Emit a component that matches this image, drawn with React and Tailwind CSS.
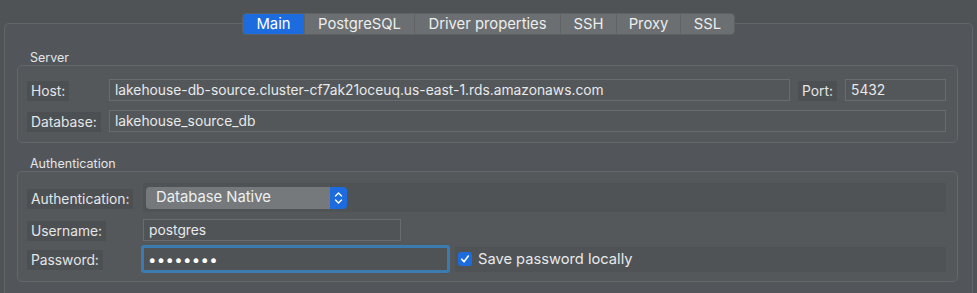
const tabs = ['Main', 'PostgreSQL', 'Driver properties', 'SSH', 'Proxy', 'SSL'];
const tabWidths = ['w-[61px]', 'w-[110px]', 'w-[146px]', 'w-[56px]', 'w-[64px]', 'w-[54px]'];

function Label({ children, className = '' }) {
  return (
    <span className={`inline-flex h-[20px] items-center bg-[#4c5053] px-[4px] text-[13.8px] text-[#e4e5e6] ${className}`}>
      {children}
    </span>
  );
}

function Field({ value, className = '' }) {
  return (
    <div className={`flex h-[22px] items-center border border-[#686c6e] bg-[#53575a] pl-[5px] text-[13.8px] text-[#e8e9ea] ${className}`}>
      {value}
    </div>
  );
}

function App() {
  return (
    <div className="h-[293px] w-[977px] overflow-hidden bg-[#4f5356] px-[4px] pt-[13px] font-['Inter',sans-serif]">
      <div className="relative z-10 flex justify-center">
        <div className="flex h-[22px] overflow-hidden rounded-[4px] border border-[#5c6062] text-[14.8px] text-[#eceded]">
          {tabs.map((t, i) => (
            <div
              key={t}
              className={`flex items-center justify-center pt-[1px] ${tabWidths[i]} ${i === 0 ? 'bg-[#1c6ce0] text-white' : 'border-l border-[#5f6365] bg-[#6b6f71]'}`}
            >
              {t}
            </div>
          ))}
        </div>
      </div>

      <div className="-mt-[12px] h-[300px] rounded-[5px] border border-[#62666a] bg-[#52565a] px-[12px] pt-[26px]">
        <div className="ml-[13px] h-[15px] text-[12.5px] leading-[15px] text-[#e4e5e6]">Server</div>
        <div className="w-[941px] rounded-[5px] border border-[#64686a] bg-[#54585b] pb-[10px] pl-[9px] pr-[11px] pt-[13px]">
          <div className="flex h-[22px] items-center">
            <div className="w-[82px]"><Label>Host:</Label></div>
            <Field value="lakehouse-db-source.cluster-cf7ak21oceuq.us-east-1.rds.amazonaws.com" className="w-[681px]" />
            <div className="ml-[8px] w-[47px]"><Label>Port:</Label></div>
            <Field value="5432" className="w-[101px]" />
          </div>
          <div className="mt-[9px] flex h-[22px] items-center">
            <div className="w-[82px]"><Label>Database:</Label></div>
            <Field value="lakehouse_source_db" className="flex-1" />
          </div>
        </div>

        <div className="ml-[13px] mt-[13px] h-[15px] text-[12.5px] leading-[15px] text-[#e4e5e6]">Authentication</div>
        <div className="w-[941px] rounded-[5px] border border-[#64686a] bg-[#54585b] pb-[8px] pl-[9px] pr-[11px] pt-[11px]">
          <div className="flex h-[29px] items-center">
            <div className="w-[116px]"><Label>Authentication:</Label></div>
            <div className="flex h-[29px] flex-1 items-center bg-[#4f5356] pl-[3px]">
              <div className="flex h-[22px] w-[201px] overflow-hidden rounded-[4px]">
                <div className="flex flex-1 items-center bg-[#75797b] pl-[10px] text-[14.8px] text-[#eef0f0]">Database Native</div>
                <div className="flex w-[17px] items-center justify-center bg-[#1c6ce0]">
                  <svg width="9" height="14" viewBox="0 0 9 14" fill="none" stroke="white" strokeWidth="1.4" strokeLinecap="round" strokeLinejoin="round">
                    <path d="M1.5 5 L4.5 2 L7.5 5" />
                    <path d="M1.5 9 L4.5 12 L7.5 9" />
                  </svg>
                </div>
              </div>
            </div>
          </div>
          <div className="mt-[7px] flex h-[22px] items-center">
            <div className="w-[116px]"><Label>Username:</Label></div>
            <Field value="postgres" className="w-[258px] bg-[#505457]" />
          </div>
          <div className="mt-[4px] flex h-[28px] items-center">
            <div className="w-[114px]"><Label>Password:</Label></div>
            <div className="flex h-[28px] w-[309px] items-center rounded-[3px] border-[3px] border-[#3b7bb0] bg-[#4f5356] pl-[4px]">
              <span className="text-[15px] leading-none tracking-[0.3px] text-white">••••••••</span>
            </div>
            <div className="ml-[5px] flex h-[25px] flex-1 items-center bg-[#4f5356] pl-[3px]">
              <div className="flex h-[14px] w-[14px] items-center justify-center rounded-[3px] bg-[#1c6ce0]">
                <svg width="10" height="10" viewBox="0 0 10 10" fill="none" stroke="white" strokeWidth="1.6" strokeLinecap="round" strokeLinejoin="round">
                  <path d="M1.8 5.2 L4 7.8 L8.3 2" />
                </svg>
              </div>
              <span className="ml-[6px] text-[14.7px] text-[#e8e9ea]">Save password locally</span>
            </div>
          </div>
        </div>
      </div>
    </div>
  );
}

export default App;
